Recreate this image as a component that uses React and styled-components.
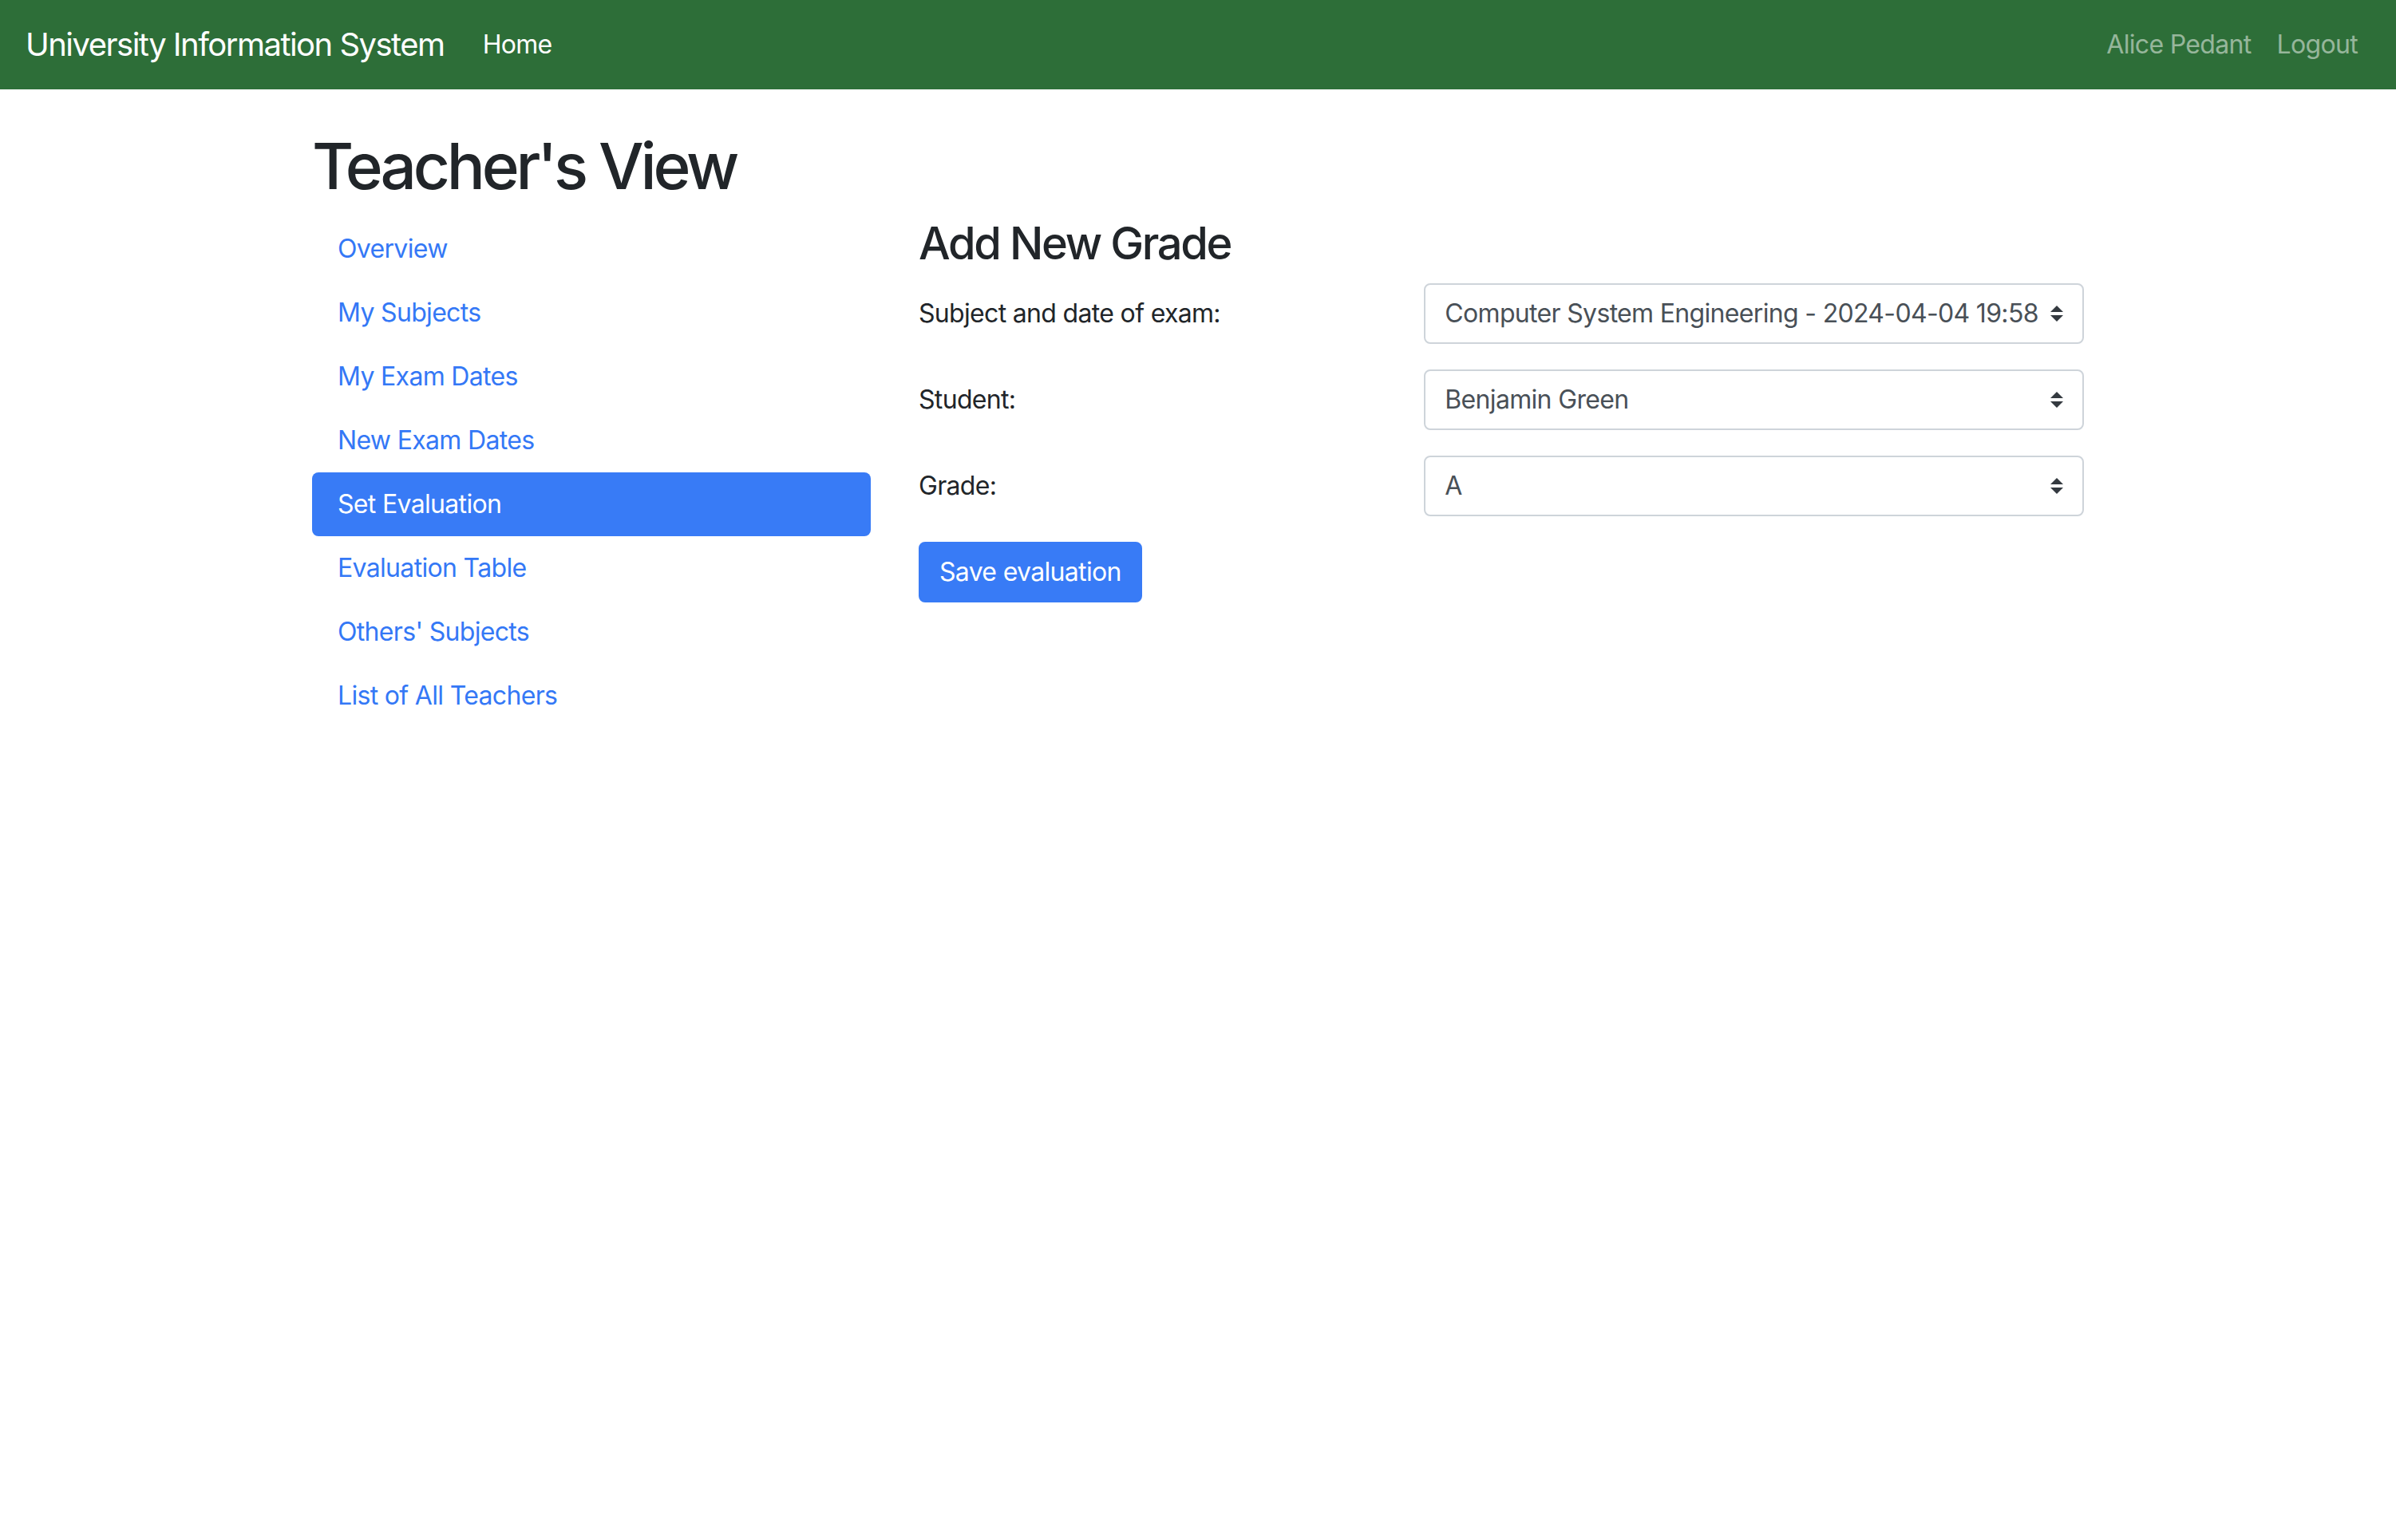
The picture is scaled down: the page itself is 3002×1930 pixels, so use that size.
import React from "react";
import styled, { createGlobalStyle } from "styled-components";

const GlobalStyle = createGlobalStyle`
  body {
    margin: 0;
    font-family: Inter, "Noto Sans", "Liberation Sans", sans-serif;
    font-size: 32px;
    line-height: 1.5;
    letter-spacing: -0.021em;
    color: #212529;
    background: #fff;
  }
  * {
    box-sizing: border-box;
  }
`;

const Navbar = styled.nav`
  display: flex;
  align-items: center;
  padding: 16px 32px;
  background-color: #2d6e38;
`;

const Brand = styled.a`
  font-size: 40px;
  line-height: 60px;
  letter-spacing: -0.038em;
  padding: 10px 0;
  margin-right: 32px;
  color: #fff;
  text-decoration: none;
  white-space: nowrap;
`;

const NavList = styled.div`
  display: flex;
  align-items: center;
  margin-left: ${(p) => (p.right ? "auto" : "0")};
`;

const NavLink = styled.a`
  padding: 0 16px;
  font-size: 32px;
  line-height: 48px;
  color: ${(p) => (p.active ? "#fff" : "rgba(255, 255, 255, 0.5)")};
  text-decoration: none;
`;

const Container = styled.div`
  width: 2280px;
  margin: 0 auto;
  padding: 0 30px;
`;

const Title = styled.h1`
  margin: 48px 0 16px;
  font-size: 80px;
  font-weight: 500;
  line-height: 1.2;
  letter-spacing: -0.052em;
`;

const Row = styled.div`
  display: flex;
  margin: 0 -30px;
`;

const Col = styled.div`
  flex: 0 0 ${(p) => (p.span / 12) * 100}%;
  max-width: ${(p) => (p.span / 12) * 100}%;
  padding: 0 30px;
`;

const SideNav = styled.nav`
  display: flex;
  flex-direction: column;
`;

const SideLink = styled.a`
  display: block;
  padding: 16px 32px;
  line-height: 48px;
  border-radius: 8px;
  color: ${(p) => (p.active ? "#fff" : "#3478f6")};
  background-color: ${(p) => (p.active ? "#387bf6" : "transparent")};
  text-decoration: none;
`;

const Heading = styled.h3`
  margin: 0 0 16px;
  font-size: 56px;
  font-weight: 500;
  line-height: 1.2;
  letter-spacing: -0.042em;
`;

const FormRow = styled.div`
  display: flex;
  margin: 0 -30px 32px;
`;

const Label = styled.label`
  flex: 0 0 41.6667%;
  max-width: 41.6667%;
  padding: 14px 30px;
  line-height: 48px;
`;

const Field = styled.div`
  flex: 0 0 58.3333%;
  max-width: 58.3333%;
  padding: 0 30px;
  position: relative;
`;

const Select = styled.select`
  display: block;
  width: 100%;
  height: 76px;
  padding: 12px 56px 12px 24px;
  font-family: inherit;
  font-size: 32px;
  line-height: 48px;
  letter-spacing: inherit;
  color: #495057;
  background: #fff;
  border: 2px solid #ced4da;
  border-radius: 8px;
  appearance: none;
  -webkit-appearance: none;
  outline: none;
`;

const Arrow = styled.svg`
  position: absolute;
  right: 56px;
  top: 28px;
  width: 16px;
  height: 20px;
  pointer-events: none;
`;

const Button = styled.button`
  padding: 12px 24px;
  font-family: inherit;
  font-size: 32px;
  line-height: 48px;
  letter-spacing: inherit;
  color: #fff;
  background-color: #387bf6;
  border: 2px solid #387bf6;
  border-radius: 8px;
`;

const menu = [
  "Overview",
  "My Subjects",
  "My Exam Dates",
  "New Exam Dates",
  "Set Evaluation",
  "Evaluation Table",
  "Others' Subjects",
  "List of All Teachers",
];

const SelectField = ({ id, options }) => (
  <Field>
    <Select id={id} defaultValue={options[0]}>
      {options.map((o) => (
        <option key={o}>{o}</option>
      ))}
    </Select>
    <Arrow viewBox="0 0 4 5">
      <path fill="#343a40" d="M2 0L0 2h4zm0 5L0 3h4z" />
    </Arrow>
  </Field>
);

const App = () => {
  return (
    <>
      <GlobalStyle />
      <Navbar>
        <Brand href="#">University Information System</Brand>
        <NavList>
          <NavLink href="#" active>
            Home
          </NavLink>
        </NavList>
        <NavList right>
          <NavLink href="#">Alice Pedant</NavLink>
          <NavLink href="#">Logout</NavLink>
        </NavList>
      </Navbar>
      <Container>
        <Title>Teacher's View</Title>
        <Row>
          <Col span={4}>
            <SideNav>
              {menu.map((item) => (
                <SideLink key={item} href="#" active={item === "Set Evaluation"}>
                  {item}
                </SideLink>
              ))}
            </SideNav>
          </Col>
          <Col span={8}>
            <Heading>Add New Grade</Heading>
            <form>
              <FormRow>
                <Label htmlFor="exam">Subject and date of exam:</Label>
                <SelectField
                  id="exam"
                  options={["Computer System Engineering - 2024-04-04 19:58"]}
                />
              </FormRow>
              <FormRow>
                <Label htmlFor="student">Student:</Label>
                <SelectField id="student" options={["Benjamin Green"]} />
              </FormRow>
              <FormRow>
                <Label htmlFor="grade">Grade:</Label>
                <SelectField id="grade" options={["A", "B", "C", "D", "E", "F"]} />
              </FormRow>
              <Button type="button">Save evaluation</Button>
            </form>
          </Col>
        </Row>
      </Container>
    </>
  );
};

export default App;
